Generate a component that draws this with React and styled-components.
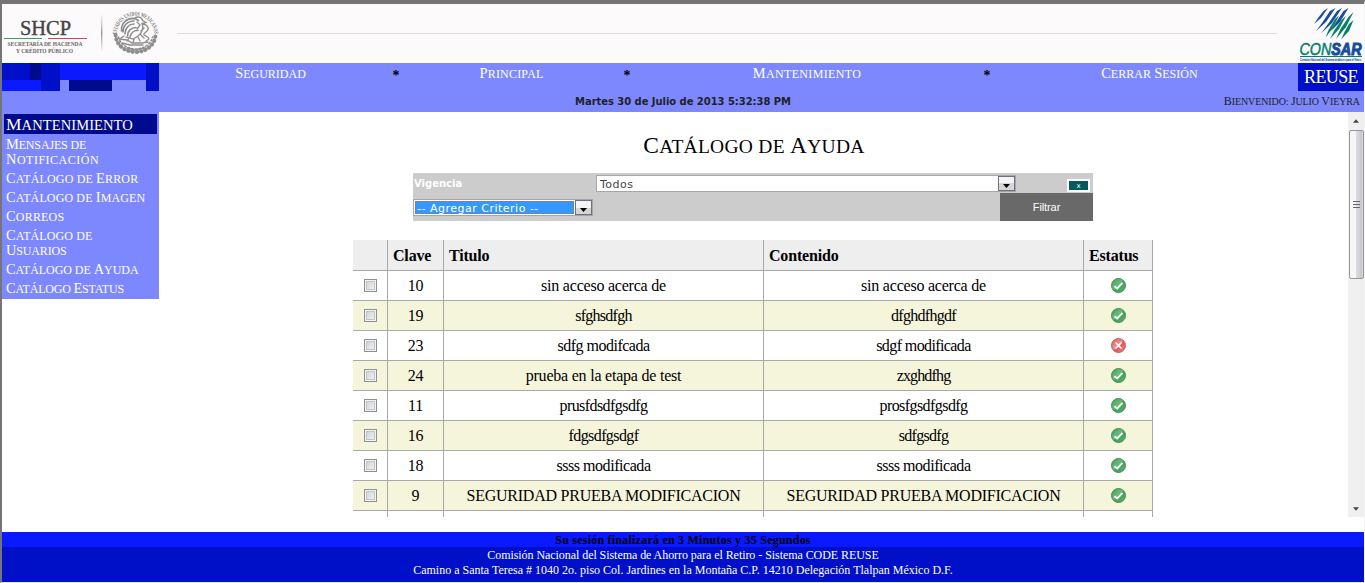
import React from "react";
import styled, { createGlobalStyle, css } from "styled-components";

const c = {
  band: "#7d88ff",
  navy: "#000a8c",
  royal: "#000fc8",
  bright: "#0a19ff",
  line: "#a9a9a9",
};

const GlobalStyle = createGlobalStyle`
  * { box-sizing: border-box; }
  html, body { margin: 0; padding: 0; background: #fff; overflow: hidden; }
  body { font-family: "Liberation Serif", "Times New Roman", serif; color: #000; }
`;

const inscription = css`
  font-family: "Liberation Serif", "Times New Roman", serif;
  white-space: nowrap;
`;

/* Words set in capitals, with a taller initial on all but the short ones */
const Word = styled.span`
  display: inline-block;
  text-transform: uppercase;
  &::first-letter {
    font-size: ${(p) => (p.$initial ? "1.2em" : "1em")};
  }
`;

const Caps = ({ children }) =>
  children.split(" ").map((word, i) => (
    <React.Fragment key={i}>
      {i > 0 && " "}
      <Word $initial={word !== "de"}>{word}</Word>
    </React.Fragment>
  ));

const Page = styled.div`
  width: 1365px;
  height: 583px;
  display: flex;
  flex-direction: column;
  border-top: 4px solid #757575;
  border-left: 2px solid #757575;
  border-right: 1px solid #f4f4f4;
  border-bottom: 1px solid #e8e8e8;
  overflow: hidden;
`;

const Header = styled.header`
  height: 59px;
  flex: none;
  display: flex;
  align-items: center;
  background: #fcfafb;
`;
const HeaderRule = styled.div`
  width: 1100px;
  height: 1px;
  margin: 0 21px 0 15px;
  background: #dcdcdc;
`;
const LogoSvg = styled.svg`
  display: block;
  overflow: visible;
`;

const Band = styled.div`
  height: 49px;
  flex: none;
  display: grid;
  grid-template-columns: 157px 1fr 66px;
  grid-template-rows: 28px 21px;
  background: ${c.band};
`;
const Mosaic = styled.div`
  display: grid;
  grid-template-columns: 28px 11px 19px 9px 43px 34px 13px;
  grid-template-rows: 17px 11px;
`;
const Tile = styled.div`
  background: ${(p) => p.$color};
  grid-column: span ${(p) => p.$span || 1};
`;
const Nav = styled.nav`
  display: flex;
`;
const NavItem = styled.a`
  ${inscription}
  width: ${(p) => p.$w}px;
  text-align: center;
  color: #fff;
  font-size: 12px;
  line-height: 21px;
  letter-spacing: ${(p) => p.$ls || 0}px;
`;
const Star = styled.span`
  width: 28px;
  text-align: center;
  font: bold 14px/26px "Liberation Serif", serif;
`;
const Reuse = styled.div`
  ${inscription}
  background: ${c.royal};
  color: #fff;
  text-align: center;
  font-size: 18px;
  line-height: 29px;
  letter-spacing: -0.6px;
`;
const InfoRow = styled.div`
  grid-column: 1 / -1;
  display: grid;
  grid-template-columns: 1fr auto 1fr;
  line-height: 21px;
`;
const DateText = styled.div`
  grid-column: 2;
  font: bold 10px/21px "DejaVu Sans", Verdana, sans-serif;
  letter-spacing: -0.05px;
  color: #222;
  white-space: nowrap;
`;
const Welcome = styled.div`
  ${inscription}
  text-align: right;
  padding-right: 4px;
  font-size: 10px;
  line-height: 20px;
  letter-spacing: -0.1px;
  color: #222;
`;

const Main = styled.div`
  height: 405px;
  flex: none;
  display: flex;
`;
const Sidebar = styled.aside`
  width: 157px;
  height: 187px;
  padding: 2px;
  background: ${c.band};
  color: #fff;
`;
const SideTitle = styled.div`
  ${inscription}
  height: 20px;
  padding-left: 2px;
  background: ${c.navy};
  font-size: 14.5px;
  line-height: 20px;
  letter-spacing: 0.1px;
`;
const SideItem = styled.a`
  display: block;
  margin-top: ${(p) => (p.$first ? 3 : 4)}px;
  padding-left: 2px;
`;
const SideLine = styled.span`
  ${inscription}
  display: block;
  height: 15px;
  font-size: 12px;
  line-height: 15px;
  letter-spacing: ${(p) => p.$ls}px;
`;

const Content = styled.main`
  width: 1188px;
  margin-right: 1px;
  overflow: hidden;
  display: flex;
  flex-direction: column;
  align-items: center;
`;
const Title = styled.h1`
  ${inscription}
  margin: 20px 0 0;
  padding-left: 2px;
  height: 41px;
  flex: none;
  font-weight: normal;
  font-size: 19.5px;
  line-height: 26px;
  letter-spacing: 0.27px;
`;
const Filter = styled.div`
  width: 680px;
  height: 48px;
  flex: none;
  display: grid;
  grid-template-columns: 183px 404px 93px;
  grid-template-rows: 20px 28px;
  background: #ccc;
`;
const FilterLabel = styled.label`
  padding-left: 1px;
  font: bold 10px/21px "DejaVu Sans", Verdana, sans-serif;
  color: #fff;
`;
const Select = styled.div`
  width: ${(p) => p.$w}px;
  height: 17px;
  margin: ${(p) => p.$m};
  display: flex;
  border: 1px solid #a5a5ad;
  background: #fff;
`;
const SelectValue = styled.div`
  flex: 1;
  margin: ${(p) => (p.$active ? "1px 0 1px 1px" : "0")};
  padding-left: ${(p) => (p.$active ? 1 : 3)}px;
  font: 11px "DejaVu Sans", Verdana, sans-serif;
  line-height: ${(p) => (p.$active ? 13 : 17)}px;
  letter-spacing: ${(p) => p.$ls || 0}px;
  white-space: nowrap;
  color: ${(p) => (p.$active ? "#fff" : "#444")};
  background: ${(p) => (p.$active ? "#3399ff" : "transparent")};
  border: 0 dotted #b0703c;
  border-width: ${(p) => (p.$active ? 1 : 0)}px;
  height: ${(p) => (p.$active ? 13 : 15)}px;
`;
const SelectButton = styled.div`
  width: 17px;
  height: 15px;
  margin-left: 1px;
  display: flex;
  align-items: flex-end;
  justify-content: center;
  padding-bottom: 2px;
  border: 1px solid #70707a;
  background: linear-gradient(#f4f4f4 50%, #d6d6d6 50%);
`;
const CloseCell = styled.div`
  display: flex;
  justify-content: flex-end;
  padding: 6px 3px 0 0;
`;
const CloseButton = styled.button`
  width: 23px;
  height: 13px;
  padding: 0;
  border: 2px solid #fff;
  background: #045c5a;
  color: #fff;
  font: 7px/8px "DejaVu Sans", sans-serif;
`;
const CriteriaCell = styled.div`
  grid-column: 1 / 3;
`;
const FilterButton = styled.button`
  border: 0;
  padding: 0;
  background: #696969;
  color: #fff;
  font: 11px/28px "Liberation Sans", Arial, sans-serif;
  letter-spacing: -0.1px;
`;

const Table = styled.table`
  width: 800px;
  margin-top: 19px;
  flex: none;
  border-collapse: separate;
  border-spacing: 0;
  table-layout: fixed;
  font-size: 16px;
`;
const Th = styled.th`
  height: 31px;
  padding: 2px 5px 0;
  text-align: left;
  letter-spacing: -0.18px;
  background: #eee;
  border-right: 1px solid ${c.line};
  border-bottom: 1px solid ${c.line};
  width: ${(p) => p.$w}px;
`;
const Row = styled.tr`
  background: ${(p) => (p.$alt ? "#f5f5dc" : "#fff")};
`;
const Td = styled.td`
  height: 30px;
  padding: 1px 0 0;
  text-align: center;
  line-height: 18px;
  letter-spacing: ${(p) => p.$ls || 0}px;
  border-right: 1px solid ${c.line};
  border-bottom: 1px solid ${c.line};
`;
const Check = styled.span`
  display: block;
  width: 13px;
  height: 13px;
  margin: -1px 10px 0 11px;
  border: 1px solid #8e8f8f;
  background: linear-gradient(135deg, #cbcfd5, #f6f6f6);
  box-shadow: inset 0 0 0 1px #f4f4f4, inset 0 0 0 2px #c0c5ca;
`;
const StatusSvg = styled.svg`
  display: block;
  margin: -1px 0 0 27px;
`;

const ScrollTrack = styled.div`
  width: 16px;
  display: flex;
  flex-direction: column;
  align-items: center;
  background: #f0f0f0;
`;
const ArrowBox = styled.div`
  height: 17px;
  display: flex;
  align-items: center;
`;
const Thumb = styled.div`
  width: 15px;
  height: 149px;
  margin: 1px 0 auto;
  display: flex;
  align-items: center;
  justify-content: center;
  border: 1px solid #979797;
  border-radius: 2px;
  background: linear-gradient(90deg, #f6f6f6 45%, #dcdce0 50%, #c6c6ce 90%, #e4e4e8);
`;

const Footer = styled.footer`
  margin-top: 15px;
  flex: 1;
  background: ${c.royal};
  color: #fff;
  text-align: center;
  font-size: 12px;
`;
const Session = styled.div`
  height: 16px;
  background: linear-gradient(${c.bright} 15px, ${c.royal} 15px);
  color: #000;
  font-weight: bold;
  line-height: 17px;
  letter-spacing: 0.23px;
`;
const FootLine = styled.div`
  line-height: 15px;
  letter-spacing: ${(p) => p.$ls || 0}px;
`;

const StatusIcon = ({ ok }) => (
  <StatusSvg width="15" height="15" viewBox="0.5 0.5 15 15">
    <defs>
      <linearGradient id={ok ? "g" : "r"} x1="0" y1="0" x2="1" y2="1">
        <stop offset="0" stopColor={ok ? "#419b55" : "#d95757"} />
        <stop offset=".45" stopColor={ok ? "#6abb7c" : "#f08f8f"} />
        <stop offset=".55" stopColor={ok ? "#3fa158" : "#e35b5b"} />
        <stop offset="1" stopColor={ok ? "#5fb673" : "#ee8080"} />
      </linearGradient>
    </defs>
    <circle cx="8" cy="8" r="7" fill={`url(#${ok ? "g" : "r"})`} stroke={ok ? "#3c8550" : "#bd5555"} strokeWidth=".9" />
    {ok ? (
      <path d="M3.9 8.7 6.7 11 12 5.4" fill="none" stroke="#fff" strokeWidth="2" />
    ) : (
      <path d="M5 5 11 11M11 5 5 11" fill="none" stroke="#fff" strokeWidth="1.7" />
    )}
  </StatusSvg>
);

const Arrow = ({ up, w = 7 }) => (
  <svg width={w} height="4" viewBox="0 0 7 4">
    <path d={up ? "M0 4 3.5 0 7 4Z" : "M0 0H7L3.5 4Z"} fill={w === 7 ? "#000" : "#444"} />
  </svg>
);

const ShcpLogo = () => (
  <LogoSvg width="160" height="59" viewBox="2 4 160 59" fontFamily="Liberation Serif, serif">
    <defs>
      <linearGradient id="sep" x1="0" y1="0" x2="0" y2="1">
        <stop offset="0" stopColor="#fff" />
        <stop offset=".5" stopColor="#999" />
        <stop offset="1" stopColor="#fff" />
      </linearGradient>
      <path id="ring" d="M116.7 34.5A18.8 18.8 0 0 1 154.3 34.5" />
    </defs>
    <text x="20" y="34.5" fontSize="20" fill="#444" stroke="#444" strokeWidth=".4" textLength="51" lengthAdjust="spacingAndGlyphs">SHCP</text>
    <path d="M4 38.5H42" stroke="#3c9b62" />
    <path d="M48 38.5H87" stroke="#d4405f" />
    <text x="7.5" y="46" fontSize="6" fontWeight="bold" fill="#666" textLength="75" lengthAdjust="spacingAndGlyphs">SECRETARÍA DE HACIENDA</text>
    <text x="16" y="52.5" fontSize="6" fontWeight="bold" fill="#666" textLength="57" lengthAdjust="spacingAndGlyphs">Y CRÉDITO PÚBLICO</text>
    <rect x="101" y="13" width="1.4" height="40" fill="url(#sep)" />
    <text fontSize="6" fontWeight="bold" fill="#777">
      <textPath href="#ring" textLength="58" lengthAdjust="spacingAndGlyphs">ESTADOS UNIDOS MEXICANOS</textPath>
    </text>
    <g fill="none" stroke="#8e8e8e" strokeLinecap="round">
      <path d="M115.6 35C116 45 125 52 135.5 52S155 45 155.5 35" strokeWidth="4" strokeDasharray=".4 3.9" />
      <path d="M118.5 37C120 44 127 49 135.5 49S151 44 152.5 37" strokeWidth="1.6" strokeDasharray="1.5 2.2" />
      <path d="M121.5 31C121 23 127 17.5 135 18.5L138.5 20.5M123 32C123 26 127 21 134 21M125 34C125 28 129 24 134 24M127.5 36C127.5 31 131 27.5 136 27.5M130 37C131 33 134 30 138 30.5" strokeWidth="1.6" />
      <path d="M134 19C137 15.5 142 17 142.5 20.5L146 22.5 142 23.5C144 28 142 33 138 36L133 39 126 37M137 22 140 25 137 29M142 24C147 24 150 28 147 31S142 34 146 36 150 39 146 41M119.5 39 127 40 132 43H142L148 42M122 43 130 45H143M138 37 140 41M134 39 133 43M129 38 127 41M144 28 141 31M140 34 144 38M124 36 121 38M127 48 135 50 145 48" strokeWidth="1.3" />
    </g>
  </LogoSvg>
);

const ConsarLogo = () => (
  <LogoSvg width="66" height="59" viewBox="1298 4 66 59" fontFamily="Liberation Sans, sans-serif">
    <g fill="#174c9c">
      <path d="M1323.5 11 1328 8 1321 18 1314 24 1318 18Z" />
      <path d="M1330 11 1335.5 8 1326 22 1316 31 1322 23Z" />
      <path d="M1337 11 1342 8 1332 23 1321 33.5 1328 24Z" />
      <path d="M1343.5 11 1348.5 8 1340 22 1331 31 1335.5 23Z" />
    </g>
    <g fill="#058067">
      <path d="M1335 19 1339 15.5 1333 28 1325.5 37.5 1328.5 30Z" />
      <path d="M1341.5 20 1346 16 1339 29 1330 39 1334.500 30Z" />
      <path d="M1348.5 17 1353.500 12 1346 27 1336 39 1340.500 29Z" />
      <path d="M1349 24 1353.500 20 1349 31 1341 39.5 1344.500 32Z" />
    </g>
    <text x="1299.5" y="54.5" fontSize="16" fontStyle="italic" fill="#058067" stroke="#058067" strokeWidth=".5" textLength="62" lengthAdjust="spacingAndGlyphs">
      CON<tspan fontWeight="bold" fill="#174c9c" stroke="#174c9c" strokeWidth="1">SAR</tspan>
    </text>
    <path d="M1300 56.5H1362" stroke="#058067" />
    <text x="1300" y="60.6" fontSize="4" fill="#174c9c" stroke="#174c9c" strokeWidth=".15" textLength="61" lengthAdjust="spacingAndGlyphs">Comisión Nacional del Sistema de Ahorro para el Retiro</text>
  </LogoSvg>
);

const sideItems = [
  [["Mensajes de", -0.15], ["Notificación", 0.5]],
  [["Catálogo de Error", 0.15]],
  [["Catálogo de Imagen", 0.12]],
  [["Correos", 0.2]],
  [["Catálogo de", 0.1], ["Usuarios", -0.15]],
  [["Catálogo de Ayuda", -0.05]],
  [["Catálogo Estatus", -0.2]],
];

const rows = [
  ["10", "sin acceso acerca de", "sin acceso acerca de", true, -0.22, -0.22],
  ["19", "sfghsdfgh", "dfghdfhgdf", true, -0.75, -0.7],
  ["23", "sdfg modifcada", "sdgf modificada", false, -0.5, -0.6],
  ["24", "prueba en la etapa de test", "zxghdfhg", true, -0.22, -0.85],
  ["11", "prusfdsdfgsdfg", "prosfgsdfgsdfg", true, -0.57, -0.57],
  ["16", "fdgsdfgsdgf", "sdfgsdfg", true, -0.6, -0.7],
  ["18", "ssss modificada", "ssss modificada", true, -0.45, -0.45],
  ["9", "SEGURIDAD PRUEBA MODIFICACION", "SEGURIDAD PRUEBA MODIFICACION", true, -0.24, -0.24],
];

export default function App() {
  return (
    <Page>
      <GlobalStyle />
      <Header>
        <ShcpLogo />
        <HeaderRule />
        <ConsarLogo />
      </Header>
      <Band>
        <Mosaic>
          <Tile $color={c.royal} />
          <Tile $color={c.navy} />
          <Tile $color={c.royal} />
          <Tile $color={c.bright} $span={3} />
          <Tile $color={c.royal} />
          <Tile $color={c.bright} $span={2} />
          <Tile $color={c.royal} />
          <Tile $color={c.band} />
          <Tile $color={c.navy} />
          <Tile $color={c.band} />
          <Tile $color={c.royal} />
        </Mosaic>
        <Nav>
          <NavItem $w={223}><Caps>Seguridad</Caps></NavItem>
          <Star>*</Star>
          <NavItem $w={203} $ls={0.2}><Caps>Principal</Caps></NavItem>
          <Star>*</Star>
          <NavItem $w={332} $ls={0.35}><Caps>Mantenimiento</Caps></NavItem>
          <Star>*</Star>
          <NavItem $w={297} $ls={0.05}><Caps>Cerrar Sesión</Caps></NavItem>
        </Nav>
        <Reuse>REUSE</Reuse>
        <InfoRow>
          <DateText>Martes 30 de Julio de 2013 5:32:38 PM</DateText>
          <Welcome><Caps>Bienvenido: Julio Vieyra</Caps></Welcome>
        </InfoRow>
      </Band>
      <Main>
        <Sidebar>
          <SideTitle><Caps>Mantenimiento</Caps></SideTitle>
          {sideItems.map((lines, i) => (
            <SideItem key={i} $first={i === 0}>
              {lines.map(([text, ls]) => (
                <SideLine key={text} $ls={ls}><Caps>{text}</Caps></SideLine>
              ))}
            </SideItem>
          ))}
        </Sidebar>
        <Content>
          <Title><Caps>Catálogo de Ayuda</Caps></Title>
          <Filter>
            <FilterLabel>Vigencia</FilterLabel>
            <Select $w={420} $m="2px 0 0 0">
              <SelectValue $ls={0.5}>Todos</SelectValue>
              <SelectButton><Arrow /></SelectButton>
            </Select>
            <CloseCell><CloseButton>x</CloseButton></CloseCell>
            <CriteriaCell>
              <Select $w={180} $m="6px 0 0 0">
                <SelectValue $active $ls={0.5}>-- Agregar Criterio --</SelectValue>
                <SelectButton><Arrow /></SelectButton>
              </Select>
            </CriteriaCell>
            <FilterButton>Filtrar</FilterButton>
          </Filter>
          <Table>
            <thead>
              <tr>
                <Th $w={35} />
                <Th $w={56}>Clave</Th>
                <Th $w={320}>Titulo</Th>
                <Th $w={320}>Contenido</Th>
                <Th $w={69}>Estatus</Th>
              </tr>
            </thead>
            <tbody>
              {rows.map(([id, title, body, ok, titleLs, bodyLs], i) => (
                <Row key={id} $alt={i % 2 === 1}>
                  <Td><Check /></Td>
                  <Td $ls={-0.2}>{id}</Td>
                  <Td $ls={titleLs}>{title}</Td>
                  <Td $ls={bodyLs}>{body}</Td>
                  <Td><StatusIcon ok={ok} /></Td>
                </Row>
              ))}
              <Row><Td /><Td /><Td /><Td /><Td /></Row>
            </tbody>
          </Table>
        </Content>
        <ScrollTrack>
          <ArrowBox><Arrow up w={6} /></ArrowBox>
          <Thumb>
            <svg width="7" height="8" viewBox="0 0 7 8"><path d="M0 .5H7M0 3.5H7M0 6.5H7" stroke="#666" /></svg>
          </Thumb>
          <ArrowBox><Arrow w={6} /></ArrowBox>
        </ScrollTrack>
      </Main>
      <Footer>
        <Session>Su sesión finalizará en 3 Minutos y 35 Segundos</Session>
        <FootLine $ls={-0.06}>Comisión Nacional del Sistema de Ahorro para el Retiro - Sistema CODE REUSE</FootLine>
        <FootLine>Camino a Santa Teresa # 1040 2o. piso Col. Jardines en la Montaña C.P. 14210 Delegación Tlalpan México D.F.</FootLine>
      </Footer>
    </Page>
  );
}
